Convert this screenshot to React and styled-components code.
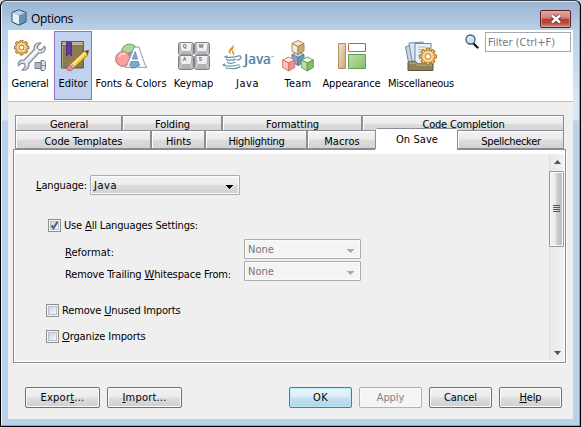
import React, { useLayoutEffect, useRef, useState } from "react";
import styled, { createGlobalStyle, css } from "styled-components";

const Global = createGlobalStyle`
  * { box-sizing: border-box; }
  html, body { margin: 0; padding: 0; overflow: hidden; }
  body { font: 11px/14px "DejaVu Sans Condensed", Tahoma, "DejaVu Sans", sans-serif; font-stretch: condensed; color: #000; background: #d8d8d8; }
  button, input { font: inherit; }
`;

/* Text that is tracked so that it fills a given width */
const Run = styled.span`
  display: inline-block;
  flex: none;
  white-space: pre;
  padding-top: 1px;
  u { text-decoration: underline; text-decoration-thickness: 1px; text-underline-offset: 1px; text-decoration-skip-ink: none; }
`;
function Fit({ w, children }) {
  const ref = useRef(null);
  const [track, setTrack] = useState(0);
  useLayoutEffect(() => {
    const el = ref.current;
    const n = el.textContent.length;
    setTrack((w + 1 - el.getBoundingClientRect().width) / n);
  }, [w]);
  return <Run ref={ref} style={{ letterSpacing: track }}>{children}</Run>;
}

const Window = styled.div`
  width: 581px;
  height: 427px;
  border: 1px solid #000;
  border-top-color: #3b3f45;
  border-radius: 6px 6px 0 0;
  background: #000;
  overflow: hidden;
`;
const Frame = styled.div`
  height: 425px;
  border: 1px solid #35c5e8;
  border-left-color: #e6f0fa;
  border-top-color: #dce8f4;
  border-radius: 5px 5px 0 0;
  padding: 0 6px 6px;
  background: linear-gradient(#9ab4d1 0, #b9d0e9 28px, #dae6f3 100px, #dae6f3 118px, #b9d1ea 119px);
  display: flex;
  flex-direction: column;
`;
const TitleBar = styled.header`
  height: 28px;
  flex: none;
  display: flex;
  align-items: flex-start;
  padding: 7px 2px 0 3px;
`;
const Title = styled.h1`
  flex: 1;
  margin: 0 0 0 4px;
  font: 400 12px/17px "Open Sans", "Noto Sans", sans-serif;
`;
const CloseButton = styled.button`
  width: 31px;
  height: 18px;
  margin-top: 1px;
  padding: 0;
  display: flex;
  align-items: center;
  justify-content: center;
  border: 1px solid #5b1d22;
  border-radius: 2px;
  background: linear-gradient(#dda69e 0, #cf8379 45%, #b43b2b 50%, #b84c39 75%, #d08b7a 100%);
  box-shadow: inset 0 0 0 1px #e4b3ab99;
`;
const Body = styled.main`
  flex: 1;
  min-height: 0;
  background: #efefef;
`;
const Toolbar = styled.nav`
  height: 72px;
  padding-top: 1px;
  display: flex;
  background: #fff;
  border-bottom: 1px solid #c0c0c0;
`;
const Tool = styled.div`
  width: ${(p) => p.$w}px;
  height: 69px;
  margin-left: ${(p) => p.$gap || 0}px;
  display: flex;
  flex-direction: column;
  align-items: center;
  border: 1px solid ${(p) => (p.$selected ? "#9372c9" : "transparent")};
  background: ${(p) => (p.$selected ? "#c1d2ee" : "transparent")};
`;
const ToolIcon = styled.svg`
  flex: none;
  width: ${(p) => p.$w || 32}px;
  height: 32px;
  margin: 8px 0 4px;
`;
const Search = styled.div`
  margin: 0 2px 0 auto;
  display: flex;
  align-items: flex-start;
  svg { margin: 3px 6px 0 0; }
`;
const Field = styled.div`
  width: 86px;
  height: 20px;
  margin-top: 1px;
  padding: 2px 0 0 2px;
  border: 1px solid #a5a8ad;
  background: #fff;
  color: #767680;
`;
const TabRow = styled.div`
  display: flex;
  align-items: flex-end;
  width: 549px;
  margin-left: 7px;
  height: ${(p) => p.$h}px;
  margin-top: ${(p) => p.$top}px;
  position: relative;
`;
const Tab = styled.div`
  width: ${(p) => p.$w}px;
  height: ${(p) => p.$h || 18}px;
  display: flex;
  justify-content: center;
  padding: ${(p) => (p.$last ? 3 : 1)}px 0 0 1px;
  border: 1px solid #8d8d98;
  border-bottom-width: ${(p) => (p.$last ? 1 : 0)}px;
  box-shadow: inset 1px 1px #fff;
  background: linear-gradient(#f3f3f3 0, #ebebeb 48%, #dcdcdc 52%, #d3d3d3 100%);
  & + & { border-left-width: 1px; }
  ${(p) => p.$selected && css`
    height: 21px;
    background: #fff;
    border-color: #8d8d98 transparent transparent;
    border-left-width: 0;
    box-shadow: none;
  `}
`;
const Panel = styled.section`
  width: 553px;
  height: 213px;
  margin-left: 5px;
  border: 1px solid #898994;
  border-top: 0;
  box-shadow: 1px 1px #fff, inset 1px 0 #fff, inset -1px 0 #fff, inset 0 -1px #fff;
  display: flex;
  padding: 4px 1px 1px;
  background: linear-gradient(#fff 4px, transparent 4px);
`;
const PanelTop = styled.div`
  height: 1px;
  width: 553px;
  margin-left: 5px;
  background: linear-gradient(90deg, #898994 362px, #fff 362px, #fff 444px, #898994 444px);
`;
const Form = styled.div`
  flex: 1;
  padding: 21px 0 0 21px;
`;
const Line = styled.div`
  display: flex;
  align-items: flex-start;
  height: ${(p) => p.$h}px;
  padding-left: ${(p) => p.$indent || 0}px;
`;
const LabelBox = styled.div`
  width: ${(p) => p.$w}px;
  padding-top: ${(p) => p.$top}px;
  flex: none;
`;
const Combo = styled.div`
  width: ${(p) => p.$w}px;
  height: 20px;
  display: flex;
  justify-content: space-between;
  padding: 2px 5px 0 3px;
  border: 1px solid #aaaab2;
  border-radius: 1px;
  box-shadow: inset 0 0 0 1px #fafafa;
  background: ${(p) => (p.$disabled ? "#f4f4f4" : "linear-gradient(#f2f2f2 0, #ebebeb 48%, #dcdcdc 52%, #d0d0d0 100%)")};
  color: ${(p) => (p.$disabled ? "#77777c" : "#000")};
  svg { margin-top: 7px; fill: ${(p) => (p.$disabled ? "#a9a9a9" : "#000")}; }
`;
const Check = styled.span`
  width: 13px;
  height: 13px;
  flex: none;
  margin-right: 3px;
  border: 1px solid #8e8f8f;
  box-shadow: inset 0 0 0 1px #f4f4f4, inset 0 0 0 2px #bcc0c6;
  background: linear-gradient(135deg, #cbcfd5 15%, #f6f6f6 80%);
  display: flex;
  svg { margin: 1px; }
`;
const CheckText = styled.span`
  display: flex;
  margin-top: -1px;
`;
const ScrollBar = styled.div`
  width: 15px;
  height: 206px;
  display: flex;
  flex-direction: column;
  align-items: center;
  border-left: 1px solid #e2e2e2;
  background: linear-gradient(90deg, #e9e9e9, #f1f1f1);
  svg { flex: none; }
`;
const Thumb = styled.div`
  width: 15px;
  height: 76px;
  margin-left: -1px;
  display: flex;
  align-items: center;
  justify-content: center;
  border: 1px solid #97979b;
  border-radius: 1px;
  box-shadow: inset 0 0 0 1px #fafafa;
  background: linear-gradient(90deg, #f3f3f3 0, #e9e9eb 45%, #d1d1d5 50%, #bdbdc3 80%, #d5d5d8 100%);
`;
const Spacer = styled.div`flex: 1;`;
const Footer = styled.footer`
  display: flex;
  gap: 7px;
  padding: 24px 11px 0 17px;
`;
const look = {
  normal: ["#707070", "linear-gradient(#f2f2f2 0, #ebebeb 48%, #dddddd 52%, #cfcfcf 100%)", "#000", "#fafafa"],
  primary: ["#3c7fb1", "linear-gradient(#eaf4fa 0, #dceef8 48%, #c5e2f0 52%, #afd5e8 100%)", "#000", "#bdeaf9"],
  disabled: ["#adb2b5", "#f4f4f4", "#838383", "#fafafa"],
};
const Button = styled.button`
  width: ${(p) => p.$w || 63}px;
  height: 21px;
  flex: none;
  padding: 1px 0 0;
  display: flex;
  justify-content: center;
  border: 1px solid ${(p) => look[p.$kind || "normal"][0]};
  border-radius: 2px;
  background: ${(p) => look[p.$kind || "normal"][1]};
  color: ${(p) => look[p.$kind || "normal"][2]};
  box-shadow: inset 0 0 0 1px ${(p) => look[p.$kind || "normal"][3]};
  line-height: 15px;
`;
const FooterSpacer = styled(Spacer)`margin: 0 -7px;`;

const teeth = (r, n) => Array.from({ length: n }, (_, i) => (
  <rect key={i} x={-r * 0.2} y={-r} width={r * 0.4} height={r * 0.5} rx=".7" transform={`rotate(${(i * 360) / n})`} />
));
function Gear({ x, y, r, dark = "#b27a2a" }) {
  return (
    <g transform={`translate(${x} ${y})`}>
      <g fill="#f5c983" stroke={dark} strokeWidth="1.2">{teeth(r, 8)}</g>
      <circle r={r * 0.73} fill="#f8d79b" stroke={dark} strokeWidth=".8" />
      <circle r={r * 0.69} fill="#f8d394" />
      <circle r={r * 0.32} fill="#fff" stroke={dark} strokeWidth="1" />
    </g>
  );
}
const Cube = ({ x, y, top, left, right, line }) => (
  <g transform={`translate(${x} ${y})`} stroke={line} strokeWidth=".9" strokeLinejoin="round">
    <path d="M0-7 6-4 0-1-6-4z" fill={top} />
    <path d="M-6-4 0-1V7l-6-3.5z" fill={left} />
    <path d="M6-4 0-1V7l6-3.5z" fill={right} />
  </g>
);

const icons = {
  general: (
    <ToolIcon viewBox="0 0 32 32">
      <Gear x={7.5} y={7.5} r={7.3} />
      <path d="M29.7 4.3 26 8.2l-3.1-.9-.7-2.8L25.7 1c-4-1-7.3 2-6.3 6.3L9 18.2c-3.8-.8-6.5 1.9-5.5 5.4l3-2.6 3 .8.7 3-3 3.2c4 .8 7.3-2 6.5-6.2L23.8 11c4.8.4 7.8-2.5 5.9-6.7z" transform="translate(1 2)" fill="#e2e6ee" stroke="#8890a1" strokeWidth="1.3" />
      <path d="M11 22 24 9.5" stroke="#fff" strokeWidth="1.2" />
      <path d="M21 22.5h6v6h-6zM27 20.5h3l1.5 2v6l-1.5 2h-3z" fill="#dbe0e8" stroke="#727b8b" strokeWidth="1" />
      <path d="M23 23v5m2-5v5M27 25.5h4" stroke="#727b8b" strokeWidth=".8" />
    </ToolIcon>
  ),
  editor: (
    <ToolIcon viewBox="0 0 32 32">
      <path d="M4.5 1.5h21.8V28H4.5z" fill="#8b7c51" stroke="#5d512f" />
      <path d="M5 2h21v3H5z" fill="#eee7cf" stroke="#756943" strokeWidth=".6" />
      <path d="M5 3.5h21" stroke="#877b57" strokeWidth=".6" />
      <path d="M5.5 6v22" stroke="#b0a27b" />
      <path d="M9.5 2.5h5V16L12 13.4 9.5 16z" fill="#6438ad" stroke="#402283" strokeWidth=".8" />
      <path d="m12 25 14.5-13.5 5-1-1.2 4.9L16 29z" fill="#f5c944" stroke="#8f6a1e" />
      <path d="m14 26 14-13" stroke="#fff0a0" strokeWidth="1.4" />
      <path d="m28 11.2 3.5-.7-.9 3.7z" fill="#5a4630" />
      <path d="m10.5 26.4 2-1.8 3.6 4-2 1.8c-2.8 1.2-5.3-1.5-3.6-4z" fill="#ee8d86" stroke="#a44e4e" strokeWidth=".8" />
      <path d="m12.6 24.4 1.5-1.2 3.5 4-1.5 1.3z" fill="#c6cbd3" stroke="#777d86" strokeWidth=".5" />
    </ToolIcon>
  ),
  fonts: (
    <ToolIcon viewBox="0 0 32 32">
      <circle cx="14.5" cy="12" r="8" fill="#aad89b" stroke="#68a35b" />
      <circle cx="18" cy="20" r="8" fill="#76add8" stroke="#477da9" />
      <circle cx="8" cy="19" r="7.3" fill="#f6a19d" stroke="#bd6665" />
      <path d="M4 17c1-4 5-4 7-3" stroke="#ffd0cc" strokeWidth="2" fill="none" />
      <path d="M19.2 7h4.7l6.4 18.5 1.6.5v1.4h-9V26l1.8-.5-1.4-4H16l-1.6 4 2 .5v1.4H10V26l1.8-.5zm1 4.6-3 7.5h5.5z" fill="#fafcff" fillRule="evenodd" stroke="#7a8796" strokeWidth=".8" />
    </ToolIcon>
  ),
  keymap: (
    <ToolIcon viewBox="0 0 32 32">
      {[[0, 2, "Q"], [16, 2, "W"], [0, 15, "A"], [16, 15, "S"]].map(([x, y, t]) => (
        <g key={t} transform={`translate(${x} ${y})`}>
          <rect x=".5" y=".5" width="15" height={y > 9 ? 14 : 12.5} rx="2" fill="#b2b4b8" stroke="#7d7f83" />
          <path d="M2.5 1h11l-1 8h-9z" fill="#f0f0f2" />
          <path d="m3.5 9-2 4M12.5 9l2 4" stroke="#d8d8da" />
          <text x="4.8" y="6.3" fontSize="5" fontFamily="Liberation Sans" fontWeight="700" fill="#666">{t}</text>
        </g>
      ))}
    </ToolIcon>
  ),
  java: (
    <ToolIcon $w={54} viewBox="0 0 54 32">
      <path d="M11.5 3c3 3.5-5.5 6-3.6 9.5l2.5 3.2c-.7-2-2.5-3 .3-5.4C14 7.2 12.5 5 11.5 3zM14.2 8.8c-3.4 1.2-4 3.1-2.5 4.7 1 1.3.2 2-.6 2.7 4-2 2-3.4 1.1-4.6-.6-1.1.4-1.8 2-2.8z" fill="#ed8b23" />
      <g fill="none" stroke="#6b93af" strokeWidth="1.2" strokeLinecap="round">
        <path d="M6 16c-7 1.4 4.5 2.2 11 .1M5.6 18.9c-.8 1.6 6.5 1.7 9 .5M6.6 21.8c-1.2 1.8 5 2 7.3.5M4 24.2c-7 1.7 7 3 14 .5M17.5 15.9c3.5-.6 3.7 3-1 4.2M5 28c6 1 12 .4 14-1.5" />
      </g>
      <text x="23" y="24" fontSize="15" fontFamily="Open Sans" fontWeight="500" fill="#547f9e" stroke="#547f9e" strokeWidth=".2" textLength="27" lengthAdjust="spacingAndGlyphs">Java</text>
      <path d="M50 16.5h3" stroke="#a5b7c8" />
    </ToolIcon>
  ),
  team: (
    <ToolIcon viewBox="0 0 32 32">
      <Cube x={16} y={18.5} top="#c4d9ed" left="#85a9cb" right="#6e96bb" line="#527799" />
      <Cube x={16} y={7.5} top="#f4e8ce" left="#f7eed8" right="#c9ad74" line="#a08350" />
      <Cube x={6.7} y={24} top="#ffe9e6" left="#fbc6c1" right="#f0908b" line="#c9706e" />
      <Cube x={25.3} y={24} top="#eaf6e5" left="#b9e0a8" right="#82bf69" line="#60984c" />
    </ToolIcon>
  ),
  appearance: (
    <ToolIcon viewBox="0 0 32 32">
      <defs>
        <linearGradient id="tan" x1="0" y1="0" x2="1" y2="1"><stop stopColor="#f1e3cc" /><stop offset="1" stopColor="#cba674" /></linearGradient>
        <linearGradient id="green" x1="0" y1="0" x2="1" y2="1"><stop stopColor="#c0e0ac" /><stop offset="1" stopColor="#86bd68" /></linearGradient>
      </defs>
      <path d="M2.5 3.5h7v25h-7z" fill="url(#tan)" stroke="#b1905e" />
      <path d="M12.5 3.5h17v8h-17z" fill="#fff" stroke="#c56058" />
      <path d="M12.5 14.5h17v14h-17z" fill="url(#green)" stroke="#659c50" />
    </ToolIcon>
  ),
  misc: (
    <ToolIcon viewBox="0 0 32 32">
      <path d="m.5 7 5-2 4 16-6 1z" fill="#c7d4e3" stroke="#71869e" />
      <path d="m4 3 14-1 1 19H7z" fill="#dce6f0" stroke="#71869e" />
      <path d="M10 3.5h16V24H10z" fill="#e8eff7" stroke="#71869e" />
      <path d="M13 7h8m-8 2.5h6m-6 2.5h4m-4 3h4" stroke="#aebdce" />
      <path d="M3 22h8l2 2h15v6.5H3z" fill="#90815a" stroke="#5e5335" />
      <path d="M3.7 23h7l2 2H27" stroke="#c9bd9b" fill="none" />
      <Gear x={23} y={16.5} r={8.4} />
    </ToolIcon>
  ),
};

const tools = [
  ["General", 36, 44, "general"], ["Editor", 28, 38, "editor"], ["Fonts & Colors", 70, 78, "fonts"],
  ["Keymap", 38.5, 47, "keymap"], ["Java", 22, 61, "java"], ["Team", 26, 40, "team"],
  ["Appearance", 57, 67, "appearance"], ["Miscellaneous", 65, 72, "misc"],
];
const upper = [["General", 37, 107], ["Folding", 34, 100], ["Formatting", 52, 140], ["Code Completion", 81, 202]];
const lower = [["Code Templates", 77, 136], ["Hints", 24, 54], ["Highlighting", 55, 102], ["Macros", 34.5, 69], ["On Save", 41, 81], ["Spellchecker", 58.5, 107]];

const Arrow = () => <svg width="8" height="4" shapeRendering="crispEdges"><path d="M0 0h7v1H6v1H5v1H4v1H3V3H2V2H1V1H0z" /></svg>;

export default function App() {
  return (
    <>
      <Global />
      <Window>
        <Frame>
          <TitleBar>
            <svg width="16" height="17" viewBox="0 0 16 17" strokeLinejoin="round">
              <path d="M8 .8 15 3.5v9.3L8 16.2 1 12.8V3.5z" fill="#7f9db8" stroke="#24445e" />
              <path d="M1.5 3.8 8 6.5v9L1.5 12.4z" fill="#e0f0f8" />
              <path d="M8 1.3 14.3 3.8 8 6.5 1.7 3.8z" fill="#b8d2e4" />
              <path d="M8 6.5 14.5 3.8v8.6L8 15.5z" fill="#6c91b0" />
            </svg>
            <Title><Fit w={41}>Options</Fit></Title>
            <CloseButton aria-label="Close">
              <svg width="12" height="10" viewBox="0 0 12 10"><path d="m2 1.5 8 7m0-7-8 7" stroke="#5b3030" strokeWidth="4" /><path d="m2 1.5 8 7m0-7-8 7" stroke="#fff" strokeWidth="2.4" /></svg>
            </CloseButton>
          </TitleBar>
          <Body>
            <Toolbar>
              {tools.map(([name, tw, w, icon], i) => (
                <Tool key={name} $w={w} $gap={i === 1 ? 2 : 0} $selected={i === 1}>
                  {icons[icon]}
                  <Fit w={tw}>{name}</Fit>
                </Tool>
              ))}
              <Search>
                <svg width="14" height="15" viewBox="0 0 14 15"><path d="m8 9 4.5 4.5" stroke="#171b20" strokeWidth="2.4" strokeLinecap="round" /><circle cx="5.5" cy="5.5" r="4.5" fill="#cce3f2" stroke="#45596d" strokeWidth="1.3" /><path d="M3 5c.4-1.5 1.5-2 3-2" stroke="#fff" fill="none" /></svg>
                <Field><Fit w={66}>Filter (Ctrl+F)</Fit></Field>
              </Search>
            </Toolbar>
            <TabRow $h={17} $top={13}>
              {upper.map(([n, tw, w]) => <Tab key={n} $w={w} $h={17}><Fit w={tw}>{n}</Fit></Tab>)}
            </TabRow>
            <TabRow $h={18} $top={-1}>
              {lower.map(([n, tw, w]) => <Tab key={n} $w={w} $h={19} $last $selected={n === "On Save"}><Fit w={tw}>{n}</Fit></Tab>)}
            </TabRow>
            <PanelTop />
            <Panel>
              <Form>
                <Line $h={44}>
                  <LabelBox $w={54} $top={3}><Fit w={50}><u>L</u>anguage:</Fit></LabelBox>
                  <Combo $w={150}><Fit w={22}>Java</Fit><Arrow /></Combo>
                </Line>
                <Line $h={20} $indent={12}>
                  <Check><svg width="9" height="9" viewBox="0 0 9 9"><path d="m1.5 4.2 2 3L7.5.8" stroke="#4257a0" strokeWidth="1.9" fill="none" /></svg></Check>
                  <CheckText><Fit w={133}>Use <u>A</u>ll Languages Settings:</Fit></CheckText>
                </Line>
                <Line $h={22} $indent={29}>
                  <LabelBox $w={179} $top={6}><Fit w={48}><u>R</u>eformat:</Fit></LabelBox>
                  <Combo $w={117} $disabled><Fit w={25}>None</Fit><Arrow /></Combo>
                </Line>
                <Line $h={43} $indent={29}>
                  <LabelBox $w={179} $top={6}><Fit w={165}>Remove Trailing <u>W</u>hitespace From:</Fit></LabelBox>
                  <Combo $w={117} $disabled><Fit w={25}>None</Fit><Arrow /></Combo>
                </Line>
                <Line $h={26} $indent={10}>
                  <Check /><CheckText><Fit w={117.5}>Remove <u>U</u>nused Imports</Fit></CheckText>
                </Line>
                <Line $h={14} $indent={10}>
                  <Check /><CheckText><Fit w={82.5}><u>O</u>rganize Imports</Fit></CheckText>
                </Line>
              </Form>
              <ScrollBar>
                <svg width="14" height="17"><path d="M4 10h7L7.5 6z" fill="#505050" /></svg>
                <Thumb><svg width="7" height="9"><path d="M0 .5h7M0 2.5h7M0 4.5h7M0 6.5h7" stroke="#55555a" shapeRendering="crispEdges" /></svg></Thumb>
                <Spacer />
                <svg width="14" height="13"><path d="M4 4h7L7.5 8z" fill="#505050" /></svg>
              </ScrollBar>
            </Panel>
            <Footer>
              <Button $w={75}><Fit w={43}>Expor<u>t</u>...</Fit></Button>
              <Button $w={75}><Fit w={43}><u>I</u>mport...</Fit></Button>
              <FooterSpacer />
              <Button $kind="primary"><Fit w={14}>OK</Fit></Button>
              <Button $kind="disabled"><Fit w={26.5}>Apply</Fit></Button>
              <Button><Fit w={32}>Cancel</Fit></Button>
              <Button><Fit w={21}><u>H</u>elp</Fit></Button>
            </Footer>
          </Body>
        </Frame>
      </Window>
    </>
  );
}
